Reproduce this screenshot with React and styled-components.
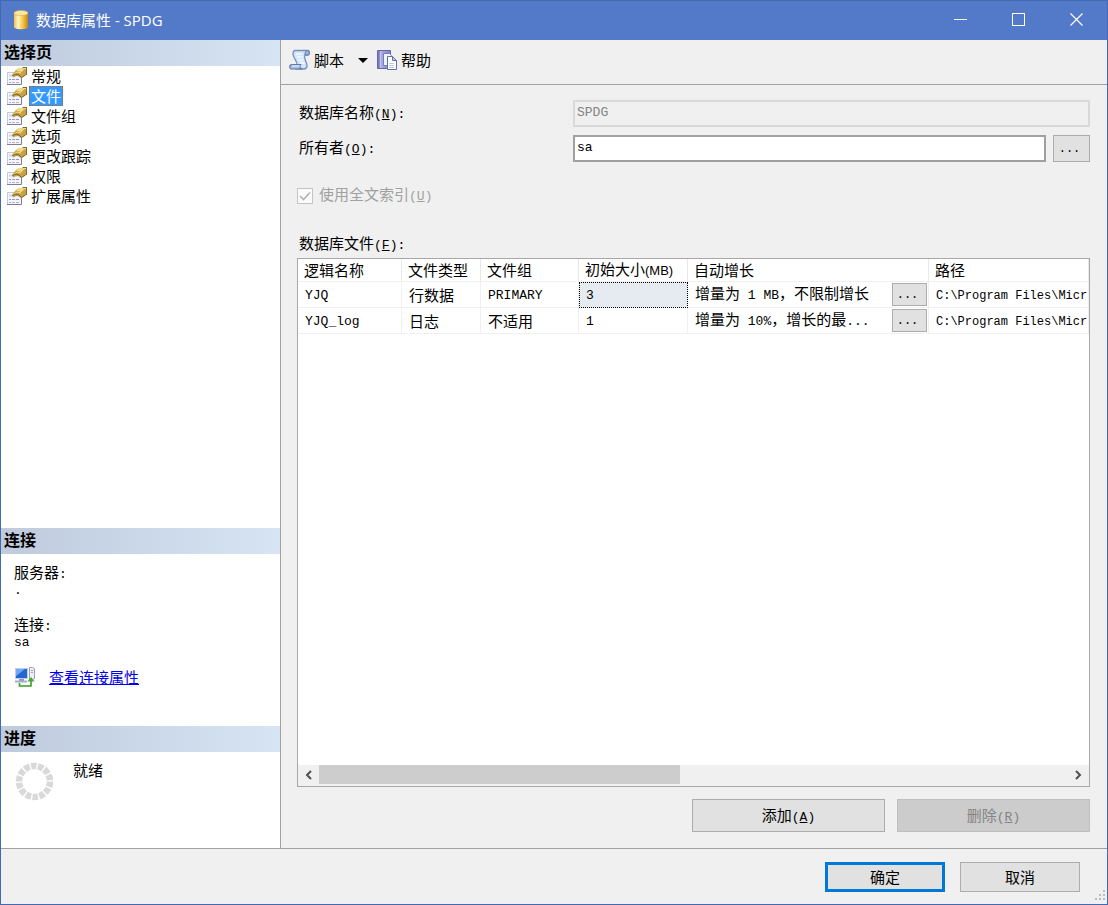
import styled, { createGlobalStyle } from 'styled-components';
import { useState } from 'react';

const GlobalStyle = createGlobalStyle`
  * {
    box-sizing: border-box;
  }

  body {
    margin: 0;
    font-family: 'Noto Sans CJK SC', sans-serif;
    font-size: 15px;
    line-height: 20px;
    color: #000;
    background-color: #f0f0f0;
  }

  button,
  input {
    font: inherit;
    color: inherit;
  }
`;

const Window = styled.div`
  display: flex;
  flex-direction: column;
  min-height: 100vh;
  border: 1px solid #4369b3;
  background-color: #f0f0f0;
`;

const TitleBar = styled.header`
  display: flex;
  align-items: center;
  height: 39px;
  padding: 0 2px 2px 10px;
  background-color: #537ac8;
  color: white;
`;

const Title = styled.h1`
  flex: 1;
  margin: 0 0 0 5px;
  font-family: 'Open Sans', 'Noto Sans CJK SC', sans-serif;
  font-size: 15px;
  font-weight: 400;
`;

const CaptionButton = styled.button`
  display: flex;
  align-items: center;
  justify-content: center;
  width: 58px;
  height: 37px;
  padding: 0;
  border: none;
  background-color: transparent;

  &:hover {
    background-color: #456bb8;
  }
`;

const Content = styled.div`
  display: flex;
  flex: 1;
  border-bottom: 1px solid #a0a0a0;
`;

const Sidebar = styled.aside`
  display: flex;
  flex-direction: column;
  flex: none;
  width: 280px;
  border-right: 1px solid #a0a0a0;
  background-color: white;
`;

const Section = styled.section`
  flex: ${(props) => (props.$grow ? '1' : 'none')};
`;

const SectionTitle = styled.h2`
  height: 26px;
  margin: 0;
  padding-left: 3px;
  background: linear-gradient(to right, #bfcbdd, #d6e4f3);
  font-size: 16px;
  line-height: 22px;
  font-weight: 700;
`;

const PageList = styled.ul`
  margin: 0;
  padding: 0 0 0 5px;
  list-style: none;
`;

const PageItem = styled.li`
  display: flex;
  align-items: center;
  gap: 2px;
  height: 20px;
`;

const PageButton = styled.button`
  height: 20px;
  padding: 0 1px;
  border: 1px ${(props) => (props.$selected ? 'dotted #b5651d' : 'solid transparent')};
  background-color: ${(props) => (props.$selected ? '#3399ff' : 'transparent')};
  color: ${(props) => (props.$selected ? 'white' : 'black')};
  line-height: 18px;
`;

const Connection = styled.div`
  height: 172px;
  padding: 8px 13px;
`;

const Info = styled.dl`
  margin: 0;
`;

const InfoName = styled.dt`
  height: 20px;
`;

const InfoValue = styled.dd`
  height: 12px;
  margin: 0 0 20px;
  line-height: 12px;
`;

const LinkRow = styled.div`
  display: flex;
  align-items: center;
  gap: 13px;
`;

const Link = styled.a`
  color: #0000ee;
  text-decoration: underline;
`;

const Progress = styled.div`
  display: flex;
  gap: 18px;
  height: 96px;
  padding: 8px 13px;
`;

// half-width characters are narrower and lighter than the Chinese text
const Latin = styled.span`
  font-family: 'Liberation Mono', monospace;
  font-size: ${(props) => (props.$small ? '12px' : '13px')};
`;

const Main = styled.main`
  display: flex;
  flex-direction: column;
  flex: 1;
  min-width: 0;
`;

const Toolbar = styled.div`
  display: flex;
  align-items: center;
  height: 45px;
  padding: 0 8px 4px;
  border-bottom: 1px solid #a0a0a0;
`;

const ToolButton = styled.button`
  display: flex;
  align-items: center;
  gap: 3px;
  padding: 0;
  border: none;
  background-color: transparent;
`;

const DropButton = styled(ToolButton)`
  justify-content: center;
  width: 32px;
  height: 24px;
  padding-left: 6px;
`;

const Form = styled.form`
  display: flex;
  flex-direction: column;
  flex: 1;
  padding: 15px 17px 16px 16px;
`;

const Fields = styled.div`
  display: grid;
  grid-template-columns: 276px 1fr;
  row-gap: 8px;
  align-items: center;
`;

const FieldLabel = styled.label`
  padding-left: 2px;
`;

const FieldBody = styled.div`
  display: flex;
  align-items: center;
  gap: 7px;
`;

const TextInput = styled.input`
  flex: 1;
  min-width: 0;
  height: 27px;
  padding: 0 2px 3px;
  border: 2px solid ${(props) => (props.disabled ? '#d9d9d9' : '#a0a0a0')};
  background-color: ${(props) => (props.disabled ? '#f0f0f0' : 'white')};
  color: ${(props) => (props.disabled ? '#838383' : 'black')};
  font-family: 'Liberation Mono', monospace;
  font-size: 13px;
`;

const BrowseButton = styled.button`
  flex: none;
  width: ${(props) => (props.$small ? '35px' : '37px')};
  height: ${(props) => (props.$small ? '23px' : '27px')};
  padding: 0 4px 0 0;
  border: 1px solid #adadad;
  background-color: #e1e1e1;
  font-family: 'Liberation Mono', monospace;
  font-size: 12px;
  line-height: 20px;
`;

const CheckLabel = styled.label`
  display: flex;
  align-items: center;
  gap: 6px;
  margin: 22px 0 26px;
  color: #a0a0a0;
`;

const CheckInput = styled.input`
  appearance: none;
  width: 16px;
  height: 16px;
  margin: 0;
  border: 1px solid #c4c4c4;
  background: #fbfbfb
    url("data:image/svg+xml,%3Csvg xmlns='http://www.w3.org/2000/svg' viewBox='0 0 14 14'%3E%3Cpath d='M2 7l3.5 3.5L12 3.5' fill='none' stroke='%23b4b4b4' stroke-width='1.6'/%3E%3C/svg%3E");
`;

const GridTitle = styled.h3`
  height: 20px;
  margin: 0 0 5px;
  padding-left: 2px;
  font-size: 15px;
  line-height: 20px;
  font-weight: 400;
`;

const GridBox = styled.div`
  display: flex;
  flex-direction: column;
  flex: 1;
  border: 1px solid #a8a8a8;
  background-color: white;
`;

const GridView = styled.div`
  flex: 1;
  overflow: hidden;
`;

const Table = styled.table`
  width: 100%;
  table-layout: fixed;
  border-collapse: separate;
  border-spacing: 0;
`;

const HeadCell = styled.th`
  width: ${(props) => props.$width || 'auto'};
  height: 23px;
  padding: 0 0 0 6px;
  border-right: 1px solid #e8e8e8;
  border-bottom: 1px solid #f0f0f0;
  font-weight: 400;
  text-align: left;
  white-space: nowrap;
`;

const Unit = styled.span`
  font-family: 'Liberation Sans', sans-serif;
  font-size: 13px;
`;

const Cell = styled.td`
  height: 26px;
  padding: 0 0 0 7px;
  border-right: 1px solid #f0f0f0;
  border-bottom: 1px solid #f0f0f0;
  overflow: hidden;
  white-space: nowrap;
  ${(props) =>
    props.$current &&
    `
    outline: 1px dotted #000;
    outline-offset: -1px;
    background-color: #e6ebf1;
  `}
`;

const GrowthCell = styled.div`
  display: flex;
  align-items: center;
  justify-content: space-between;
  padding-right: 1px;
`;

const ScrollBar = styled.div`
  display: flex;
  height: 21px;
  background-color: #f0f0f0;
`;

const ScrollArrow = styled.button`
  display: flex;
  align-items: center;
  justify-content: center;
  width: 21px;
  padding: 0 0 2px;
  border: none;
  background-color: transparent;
`;

const ScrollTrack = styled.div`
  flex: 1;
  padding: 0 0 1px;
`;

const ScrollThumb = styled.div`
  width: 48.2%;
  height: 19px;
  background-color: #cdcdcd;
`;

const GridActions = styled.div`
  display: flex;
  justify-content: flex-end;
  gap: 12px;
  padding-top: 12px;
`;

const Button = styled.button`
  width: ${(props) => (props.$wide ? '193px' : '120px')};
  height: ${(props) => (props.$wide ? '33px' : '30px')};
  padding: ${(props) => (props.$wide ? '2px 0 0' : '0')};
  border: ${(props) => (props.$primary ? '3px solid #0078d7' : '1px solid #adadad')};
  background-color: #e1e1e1;

  &:disabled {
    border-color: #bfbfbf;
    background-color: #cccccc;
    color: #838383;
  }
`;

const Footer = styled.footer`
  display: flex;
  align-items: center;
  justify-content: flex-end;
  gap: 15px;
  height: 55px;
  padding-left: 28px;
`;

const GripHolder = styled.div`
  align-self: flex-end;
  width: 12px;
  height: 14px;
  line-height: 0;
`;

function DatabaseIcon() {
  return (
    <svg width="20" height="22" viewBox="0 0 20 22">
      <defs>
        <linearGradient id="gold">
          <stop offset="0" stopColor="#f0bd4a" />
          <stop offset="0.3" stopColor="#fff6c8" />
          <stop offset="0.6" stopColor="#f8cd4a" />
          <stop offset="1" stopColor="#c98412" />
        </linearGradient>
      </defs>
      <path d="M3 4v14c0 3 14 3 14 0V4z" fill="url(#gold)" />
      <ellipse cx="10" cy="4" rx="7" ry="2.6" fill="#fbe7a4" stroke="#e3ab36" strokeWidth="0.6" />
    </svg>
  );
}

function PageIcon() {
  return (
    <svg width="21" height="20" viewBox="0 0 21 20">
      <path d="M1 6h14v12H1z" fill="#f3f5fc" />
      <path d="M1.500 18V6.500H9" fill="none" stroke="#c3c9d8" />
      <path d="M1 18.500h14.500V10" fill="none" stroke="#76809f" />
      <path d="M3 9.500h5" stroke="#d3d7e2" strokeWidth="2" />
      <path d="M3 13.500h2m1 0h3m1 0h3" stroke="#8b99dc" />
      <path d="M3 16.500h2m1 0h3m1 0h3" stroke="#d9a3b4" />
      <path d="M6 9l4-5 3-2 6 .5 1 1V9l-5 3-3-2-3 .5-2 1z" fill="#c9a343" />
      <path d="M10 4.500L13 2l6 .5-3.500 3.500z" fill="#f3dc86" />
      <path d="M7.500 8.500l4-2.500 3.500 1" fill="none" stroke="#f0dfa0" />
      <path d="M6.500 9.500L10 8l3 1 2.500 2.500 4-2.500" fill="none" stroke="#766434" />
      <path d="M16.500 1.500h4V9" fill="none" stroke="#806c32" strokeWidth="1.200" />
    </svg>
  );
}

function ScriptIcon() {
  return (
    <svg width="22" height="22" viewBox="0 0 22 22">
      <path
        d="M6 1.500h12.500c2.500 0 2.500 4.500 0 4.500H16c-1.500 3 1.500 7 2 10 .3 2-1 4-3 4H7l1-4C8.500 12 4 9 4 5c0-2 .8-3.500 2-3.500z"
        fill="#d3e5f8"
        stroke="#7590bd"
        strokeWidth="1.300"
      />
      <path d="M18.500 1.500c-2.500 0-3 4.500-2 4.500h2c2.500 0 2.500-4.500 0-4.500z" fill="#9fb4d6" stroke="#5f79a8" />
      <path
        d="M3 15.500h8.500c-1.500 1.500-.5 4.500 2 4.500H3c-3 0-3-4.500 0-4.500z"
        fill="#a9bfe0"
        stroke="#5f79a8"
        strokeWidth="1.200"
      />
      <path d="M3 17h8" stroke="#e8f1fb" />
      <path d="M7 5h6M8 8h5.500M9.500 11h5M11 14h5" stroke="#f5faff" strokeWidth="1.600" />
    </svg>
  );
}

function HelpIcon() {
  return (
    <svg width="22" height="22" viewBox="0 0 22 22">
      <defs>
        <linearGradient id="book">
          <stop offset="0" stopColor="#6a6bb2" />
          <stop offset="0.3" stopColor="#a9abe0" />
          <stop offset="1" stopColor="#7c80c4" />
        </linearGradient>
      </defs>
      <path d="M1.500 1.500h13v18h-13z" fill="url(#book)" stroke="#6468ab" />
      <path d="M4.500 2v17" stroke="#c3c5ec" />
      <path d="M7.500 4.500h6l2 2v10h-8z" fill="#eef3fe" stroke="#7180b8" />
      <path d="M11.500 7.500h5l4 4v9h-9z" fill="#fff" stroke="#5f70a6" />
      <path d="M16.500 7.500v4h4z" fill="#c3d1ee" stroke="#5f70a6" />
      <path d="M13 14.500h5M13 16.500h5M13 18.500h5" stroke="#bacaea" />
    </svg>
  );
}

function ConnectionIcon() {
  return (
    <svg width="22" height="22" viewBox="0 0 22 22">
      <path d="M1 2h13v11H1z" fill="#bccbe6" />
      <path d="M2 3h11v9H2z" fill="#2467d4" />
      <path d="M2 3h9l-9 7z" fill="#6fa9f4" />
      <path d="M5 13h5v2H5z" fill="#8f9cb3" />
      <path d="M1 15.500h12" stroke="#a5b0c4" strokeWidth="2" />
      <path d="M15.500 1.500h3l2 1v10l-2 1h-3z" fill="#eceff6" stroke="#98a2b8" />
      <path d="M17 4.500h2M17 6.500h2" stroke="#9aa6bd" />
      <path d="M5.500 17v3H17v-6" fill="none" stroke="#3c9a2c" strokeWidth="1.600" />
      <path d="M13.500 15.500l3.500-4.500 3.500 4.500z" fill="#45a832" />
    </svg>
  );
}

function Spinner() {
  return (
    <svg width="41" height="41" viewBox="0 0 41 41">
      <circle
        cx="20.5"
        cy="21.5"
        r="15.500"
        pathLength="140"
        fill="none"
        stroke="#d9d9d9"
        strokeWidth="6.500"
        strokeDasharray="8 2"
      />
    </svg>
  );
}

function Chevron({ d }) {
  return (
    <svg width="9" height="10" viewBox="0 0 9 10">
      <path d={d} fill="none" stroke="#505050" strokeWidth="2" />
    </svg>
  );
}

const pages = ['常规', '文件', '文件组', '选项', '更改跟踪', '权限', '扩展属性'];

const files = [
  {
    name: 'YJQ',
    type: '行数据',
    group: <Latin>PRIMARY</Latin>,
    size: 3,
    growth: (
      <>
        增量为<Latin> 1 MB</Latin>，不限制增长
      </>
    ),
  },
  {
    name: 'YJQ_log',
    type: '日志',
    group: '不适用',
    size: 1,
    growth: (
      <>
        增量为<Latin> 10%</Latin>，增长的最<Latin>...</Latin>
      </>
    ),
  },
];

function AccessKey({ letter, colon }) {
  return (
    <Latin>
      (<u>{letter}</u>){colon && ':'}
    </Latin>
  );
}

function PagePanel() {
  const [page, setPage] = useState('文件');

  return (
    <Sidebar>
      <Section $grow>
        <SectionTitle>选择页</SectionTitle>
        <PageList>
          {pages.map((name) => (
            <PageItem key={name}>
              <PageIcon />
              <PageButton $selected={name === page} onClick={() => setPage(name)}>
                {name}
              </PageButton>
            </PageItem>
          ))}
        </PageList>
      </Section>
      <Section>
        <SectionTitle>连接</SectionTitle>
        <Connection>
          <Info>
            <InfoName>
              服务器<Latin>:</Latin>
            </InfoName>
            <InfoValue>
              <Latin>.</Latin>
            </InfoValue>
            <InfoName>
              连接<Latin>:</Latin>
            </InfoName>
            <InfoValue>
              <Latin>sa</Latin>
            </InfoValue>
          </Info>
          <LinkRow>
            <ConnectionIcon />
            <Link href="#connection">查看连接属性</Link>
          </LinkRow>
        </Connection>
      </Section>
      <Section>
        <SectionTitle>进度</SectionTitle>
        <Progress>
          <Spinner />
          就绪
        </Progress>
      </Section>
    </Sidebar>
  );
}

function FileGrid() {
  return (
    <GridBox>
      <GridView>
        <Table aria-labelledby="files-title">
          <thead>
            <tr>
              <HeadCell $width="104px">逻辑名称</HeadCell>
              <HeadCell $width="79px">文件类型</HeadCell>
              <HeadCell $width="98px">文件组</HeadCell>
              <HeadCell $width="109px">
                初始大小<Unit>(MB)</Unit>
              </HeadCell>
              <HeadCell $width="241px">自动增长</HeadCell>
              <HeadCell>路径</HeadCell>
            </tr>
          </thead>
          <tbody>
            {files.map((file, index) => (
              <tr key={file.name}>
                <Cell>
                  <Latin>{file.name}</Latin>
                </Cell>
                <Cell>{file.type}</Cell>
                <Cell>{file.group}</Cell>
                <Cell $current={index === 0}>
                  <Latin>{file.size}</Latin>
                </Cell>
                <Cell>
                  <GrowthCell>
                    <span>{file.growth}</span>
                    <BrowseButton type="button" $small>
                      ...
                    </BrowseButton>
                  </GrowthCell>
                </Cell>
                <Cell>
                  <Latin $small>C:\Program Files\Micr</Latin>
                </Cell>
              </tr>
            ))}
          </tbody>
        </Table>
      </GridView>
      <ScrollBar>
        <ScrollArrow type="button" aria-label="向左滚动">
          <Chevron d="M7 1L3 5l4 4" />
        </ScrollArrow>
        <ScrollTrack>
          <ScrollThumb />
        </ScrollTrack>
        <ScrollArrow type="button" aria-label="向右滚动">
          <Chevron d="M2 1l4 4-4 4" />
        </ScrollArrow>
      </ScrollBar>
    </GridBox>
  );
}

function App() {
  const [owner, setOwner] = useState('sa');

  return (
    <>
      <GlobalStyle />
      <Window>
        <TitleBar>
          <DatabaseIcon />
          <Title>数据库属性 - SPDG</Title>
          <CaptionButton aria-label="最小化">
            <svg width="13" height="13">
              <path d="M0 6.500h13" stroke="white" />
            </svg>
          </CaptionButton>
          <CaptionButton aria-label="最大化">
            <svg width="13" height="13">
              <rect x="0.5" y="0.5" width="12" height="12" fill="none" stroke="white" />
            </svg>
          </CaptionButton>
          <CaptionButton aria-label="关闭">
            <svg width="13" height="13">
              <path d="M.5.5l12 12M12.500.5l-12 12" stroke="white" strokeWidth="1.200" />
            </svg>
          </CaptionButton>
        </TitleBar>
        <Content>
          <PagePanel />
          <Main>
            <Toolbar>
              <ToolButton>
                <ScriptIcon />
                脚本
              </ToolButton>
              <DropButton aria-label="脚本选项">
                <svg width="10" height="5">
                  <path d="M0 0h10L5 5z" />
                </svg>
              </DropButton>
              <ToolButton>
                <HelpIcon />
                帮助
              </ToolButton>
            </Toolbar>
            <Form onSubmit={(e) => e.preventDefault()}>
              <Fields>
                <FieldLabel htmlFor="db-name">
                  数据库名称
                  <AccessKey letter="N" colon />
                </FieldLabel>
                <FieldBody>
                  <TextInput id="db-name" value="SPDG" disabled readOnly />
                </FieldBody>
                <FieldLabel htmlFor="db-owner">
                  所有者
                  <AccessKey letter="O" colon />
                </FieldLabel>
                <FieldBody>
                  <TextInput
                    id="db-owner"
                    value={owner}
                    onChange={(e) => setOwner(e.target.value)}
                  />
                  <BrowseButton type="button">...</BrowseButton>
                </FieldBody>
              </Fields>
              <CheckLabel>
                <CheckInput type="checkbox" defaultChecked disabled />
                <span>
                  使用全文索引
                  <AccessKey letter="U" />
                </span>
              </CheckLabel>
              <GridTitle id="files-title">
                数据库文件
                <AccessKey letter="F" colon />
              </GridTitle>
              <FileGrid />
              <GridActions>
                <Button type="button" $wide>
                  添加
                  <AccessKey letter="A" />
                </Button>
                <Button type="button" $wide disabled>
                  删除
                  <AccessKey letter="R" />
                </Button>
              </GridActions>
            </Form>
          </Main>
        </Content>
        <Footer>
          <Button $primary>确定</Button>
          <Button>取消</Button>
          <GripHolder>
            <svg width="12" height="12">
              <path
                d="M8 0h2v2H8zM4 4h2v2H4zM8 4h2v2H8zM0 8h2v2H0zM4 8h2v2H4zM8 8h2v2H8z"
                fill="#bcbcbc"
              />
            </svg>
          </GripHolder>
        </Footer>
      </Window>
    </>
  );
}

export default App;
